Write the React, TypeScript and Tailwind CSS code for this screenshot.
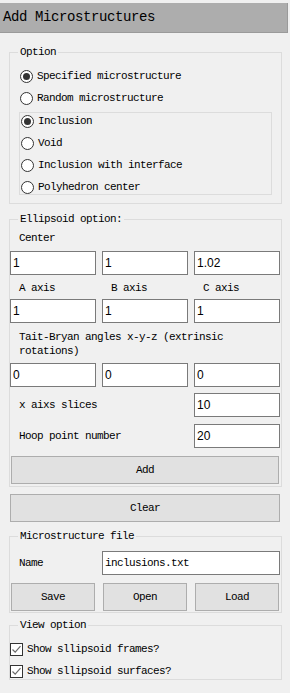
import React from "react";

const mono = "font-['Liberation_Mono',monospace] text-[11px] tracking-[-0.6px] leading-[14px] text-black";

function Radio({ checked, label }: { checked?: boolean; label: string }) {
  return (
    <div className="flex h-[14px] items-center">
      <span className="ml-[10px] flex h-[13px] w-[13px] items-center justify-center rounded-full border border-[#333] bg-white">
        {checked && <span className="h-[7px] w-[7px] rounded-full bg-[#333]" />}
      </span>
      <span className={`ml-[4px] ${mono}`}>{label}</span>
    </div>
  );
}

function Check({ label }: { label: string }) {
  return (
    <div className="flex h-[14px] items-center">
      <span className="flex h-[13px] w-[13px] items-center justify-center border border-[#333] bg-white">
        <svg width="11" height="11" viewBox="0 0 11 11">
          <path d="M1.5 5.5 L4.2 8.2 L9.5 2.2" fill="none" stroke="#6a6a6a" strokeWidth="1.2" />
        </svg>
      </span>
      <span className={`ml-[4px] ${mono}`}>{label}</span>
    </div>
  );
}

function Field({ value, wide }: { value: string; wide?: boolean }) {
  return (
    <div
      className={`flex h-[24px] items-center border border-[#7a7a7a] bg-white pl-[2px] ${
        wide ? mono : "font-['Liberation_Sans',sans-serif] text-[12px] text-black"
      }`}
    >
      {value}
    </div>
  );
}

function Button({ label, className = "" }: { label: string; className?: string }) {
  return (
    <div
      className={`flex h-[28px] items-center justify-center border border-[#adadad] bg-[#e1e1e1] ${mono} ${className}`}
    >
      {label}
    </div>
  );
}

function Group({
  title,
  className = "",
  children,
}: {
  title: string;
  className?: string;
  children: React.ReactNode;
}) {
  return (
    <fieldset className={`ml-[9px] w-[273px] border border-[#dcdcdc] ${className}`}>
      <legend className={`ml-[8px] px-[2px] ${mono}`}>{title}</legend>
      {children}
    </fieldset>
  );
}

export default function App() {
  return (
    <div className="h-[693px] w-[290px] overflow-hidden bg-[#f0f0f0] pt-[3px]">
      <div className="mr-[2px] flex h-[30px] items-center border-b border-r border-[#9a9a9a] bg-[#adadad] pl-[3px] font-['Liberation_Mono',monospace] text-[14px] tracking-[-0.4px] text-black">
        Add Microstructures
      </div>

      <Group title="Option" className="mt-[12px] pb-[8px]">
        <div className="flex flex-col gap-[8px] pt-[10px]">
          <Radio checked label="Specified microstructure" />
          <Radio label="Random microstructure" />
        </div>
        <div className="mx-[9px] mt-[7px] flex flex-col gap-[8px] border border-[#dcdcdc] pt-[1px]">
          <div className="-ml-[9px] flex flex-col gap-[8px]">
            <Radio checked label="Inclusion" />
            <Radio label="Void" />
            <Radio label="Inclusion with interface" />
            <Radio label="Polyhedron center" />
          </div>
        </div>
      </Group>

      <Group title="Ellipsoid option:" className="mt-[8px] pb-[2px]">
        <div className="w-[270px]">
          <div className={`mt-[5px] pl-[9px] ${mono}`}>Center</div>
          <div className="mt-[6px] grid grid-cols-3 gap-[6px]">
            <Field value="1" />
            <Field value="1" />
            <Field value="1.02" />
          </div>
          <div className={`mt-[6px] grid grid-cols-3 gap-[6px] ${mono}`}>
            <span className="pl-[9px]">A axis</span>
            <span className="pl-[9px]">B axis</span>
            <span className="pl-[9px]">C axis</span>
          </div>
          <div className="mt-[4px] grid grid-cols-3 gap-[6px]">
            <Field value="1" />
            <Field value="1" />
            <Field value="1" />
          </div>
          <div className={`mt-[7px] pl-[9px] pr-[20px] ${mono}`}>
            Tait-Bryan angles x-y-z (extrinsic rotations)
          </div>
          <div className="mt-[5px] grid grid-cols-3 gap-[6px]">
            <Field value="0" />
            <Field value="0" />
            <Field value="0" />
          </div>
          <div className="mt-[6px] grid grid-cols-3 items-center gap-[6px]">
            <span className={`col-span-2 pl-[9px] ${mono}`}>x aixs slices</span>
            <Field value="10" />
          </div>
          <div className="mt-[7px] grid grid-cols-3 items-center gap-[6px]">
            <span className={`col-span-2 pl-[9px] ${mono}`}>Hoop point number</span>
            <Field value="20" />
          </div>
          <Button label="Add" className="ml-[1px] mt-[8px] w-[268px]" />
        </div>
      </Group>

      <Button label="Clear" className="ml-[10px] mt-[7px] w-[270px]" />

      <Group title="Microstructure file" className="mt-[7px] pb-[1px]">
        <div className="w-[270px]">
          <div className="mt-[8px] grid grid-cols-[92px_1fr] items-center">
            <span className={`pl-[9px] ${mono}`}>Name</span>
            <Field value="inclusions.txt" wide />
          </div>
          <div className="ml-[1px] mt-[8px] grid w-[268px] grid-cols-3 gap-[8px]">
            <Button label="Save" />
            <Button label="Open" />
            <Button label="Load" />
          </div>
        </div>
      </Group>

      <Group title="View option" className="mt-[5px] pb-[1px]">
        <div className="flex flex-col gap-[8px] pt-[10px]">
          <Check label="Show sllipsoid frames?" />
          <Check label="Show sllipsoid surfaces?" />
        </div>
      </Group>
    </div>
  );
}
